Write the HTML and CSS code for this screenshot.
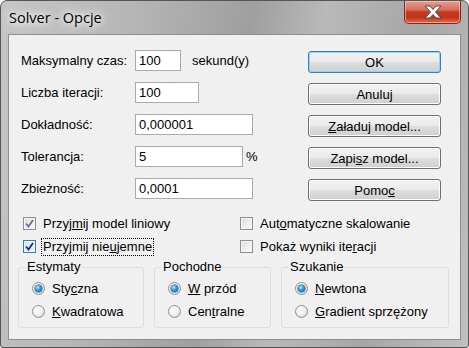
FILE: index.html
```html
<!DOCTYPE html>
<html lang="pl">
<head>
  <meta charset="UTF-8">
  <title>Solver - Opcje</title>
  <link rel="stylesheet" href="styles.css">
</head>
<body>
  <div class="window">
    <div class="titlebar">
      <span class="title">Solver - Opcje</span>
      <span class="close">
        <svg width="18" height="14" viewBox="0 0 18 14">
          <polygon points="1,1 6,1 9,4.5 12,1 17,1 11.5,7 17,13 12,13 9,9.5 6,13 1,13 6.5,7" fill="#fff" stroke="#4a4a4a" stroke-width="1" stroke-linejoin="round"/>
        </svg>
      </span>
    </div>

    <div class="client">
      <div class="top">
        <div class="fields">
          <div class="row">
            <label>Maksymalny czas:</label>
            <input class="tb w46" type="text" value="100">
            <span class="unit">sekund(y)</span>
          </div>
          <div class="row">
            <label>Liczba iteracji:</label>
            <input class="tb w64" type="text" value="100">
          </div>
          <div class="row">
            <label>Dokładność:</label>
            <input class="tb w118" type="text" value="0,000001">
          </div>
          <div class="row">
            <label>Tolerancja:</label>
            <input class="tb w108" type="text" value="5">
            <span class="pct">%</span>
          </div>
          <div class="row">
            <label>Zbieżność:</label>
            <input class="tb w118" type="text" value="0,0001">
          </div>
        </div>

        <div class="buttons">
          <button class="btn default">OK</button>
          <button class="btn">Anuluj</button>
          <button class="btn"><u>Z</u>aładuj model...</button>
          <button class="btn">Zapi<u>s</u>z model...</button>
          <button class="btn">Pomo<u>c</u></button>
        </div>
      </div>

      <div class="checks">
        <div class="opt">
          <span class="cb on"><svg width="9" height="9" viewBox="0 0 9 9"><path d="M1 4.5 L3.5 7.5 L8 1" fill="none" stroke="#5d72a8" stroke-width="1.8"/></svg></span>
          <span class="lbl">Przyj<u>m</u>ij model liniowy</span>
        </div>
        <div class="opt">
          <span class="cb"></span>
          <span class="lbl">Aut<u>o</u>matyczne skalowanie</span>
        </div>
        <div class="opt">
          <span class="cb on hot"><svg width="9" height="9" viewBox="0 0 9 9"><path d="M1 4.5 L3.5 7.5 L8 1" fill="none" stroke="#1c2f78" stroke-width="1.8"/></svg></span>
          <span class="lbl focus">Przyjmij nie<u>u</u>jemne</span>
        </div>
        <div class="opt">
          <span class="cb"></span>
          <span class="lbl">Pokaż wyniki ite<u>r</u>acji</span>
        </div>
      </div>

      <div class="groups">
        <fieldset class="grp g-est">
          <legend>Estymaty</legend>
          <div class="radios">
            <div class="opt"><span class="rb on"></span><span class="lbl">Sty<u>c</u>zna</span></div>
            <div class="opt"><span class="rb"></span><span class="lbl"><u>K</u>wadratowa</span></div>
          </div>
        </fieldset>
        <fieldset class="grp g-poch">
          <legend>Pochodne</legend>
          <div class="radios">
            <div class="opt"><span class="rb on"></span><span class="lbl"><u>W</u> przód</span></div>
            <div class="opt"><span class="rb"></span><span class="lbl">Cen<u>t</u>ralne</span></div>
          </div>
        </fieldset>
        <fieldset class="grp g-szuk">
          <legend>Szukanie</legend>
          <div class="radios">
            <div class="opt"><span class="rb on"></span><span class="lbl"><u>N</u>ewtona</span></div>
            <div class="opt"><span class="rb"></span><span class="lbl"><u>G</u>radient sprzężony</span></div>
          </div>
        </fieldset>
      </div>
    </div>
  </div>
</body>
</html>
```

FILE: styles.css
```css
body {
  margin: 0;
  background: #fff;
  font-family: "Liberation Sans", Arial, sans-serif;
  font-size: 13px;
  color: #000;
}

/* ramka okna */
.window {
  box-sizing: border-box;
  width: 469px;
  height: 348px;
  border: 1px solid #555;
  border-radius: 7px 7px 3px 3px;
  background: linear-gradient(100deg, #c6c6c6 0%, #b6b6b6 25%, #9f9f9f 48%, #b9b9b9 62%, #a6a6a6 80%, #c0c0c0 100%);
  display: flex;
  flex-direction: column;
}

.titlebar {
  height: 33px;
  display: flex;
  justify-content: space-between;
  align-items: flex-start;
}

.title {
  margin: 7px 0 0 8px;
  font-family: "Open Sans", "Noto Sans", sans-serif;
  font-size: 14.5px;
  line-height: 20px;
  color: #000;
  text-shadow: 0 0 6px #fff, 0 0 10px #fff, 0 0 16px rgba(255, 255, 255, 0.9);
}

.close {
  width: 57px;
  height: 23px;
  margin-right: 7px;
  box-sizing: border-box;
  border: 1px solid #7a2a1e;
  border-top: none;
  border-radius: 0 0 5px 5px;
  background: linear-gradient(#e6a093 0%, #d76d58 40%, #c8381f 50%, #c3341c 75%, #dd6d52 100%);
  box-shadow: inset 0 0 0 1px rgba(255, 220, 210, 0.5);
  display: flex;
  align-items: center;
  justify-content: center;
}

/* obszar klienta */
.client {
  flex: 1;
  margin: 0 7px 7px;
  background: #f0f0f0;
  border: 1px solid #8e8e8e;
}

.top {
  display: flex;
}

.fields {
  flex: 1;
  padding: 15px 0 0 12px;
  display: flex;
  flex-direction: column;
  gap: 11px;
}

.row {
  height: 21px;
  display: flex;
  align-items: center;
}

.row label {
  width: 114px;
}

.tb {
  box-sizing: border-box;
  height: 21px;
  margin: 0;
  padding: 0 3px;
  border: 1px solid #a5acb5;
  background: #fff;
  font: inherit;
  color: #000;
}

.w46 { width: 46px; }
.w64 { width: 64px; }
.w108 { width: 108px; }
.w118 { width: 118px; }

.unit {
  margin-left: 11px;
}

.pct {
  margin-left: 3px;
}

.buttons {
  width: 133px;
  margin: 16px 19px 0 0;
  display: flex;
  flex-direction: column;
  gap: 10px;
}

.btn {
  height: 22px;
  margin: 0;
  padding: 0;
  border: 1px solid #707070;
  border-radius: 3px;
  background: linear-gradient(#f2f2f2 0%, #ebebeb 48%, #dddddd 52%, #cfcfcf 100%);
  box-shadow: inset 0 0 0 1px #fcfcfc;
  font: inherit;
  color: #000;
}

.btn.default {
  border-color: #3c7fb1;
  box-shadow: inset 0 0 0 1px #8fd4f2;
}

/* pola wyboru */
.checks {
  margin-top: 14px;
  padding-left: 14px;
  display: grid;
  grid-template-columns: 217px 1fr;
  row-gap: 6px;
}

.opt {
  height: 17px;
  display: flex;
  align-items: center;
}

.cb {
  box-sizing: border-box;
  width: 13px;
  height: 13px;
  flex: none;
  border: 1px solid #8e8f8f;
  background: linear-gradient(135deg, #dcdcdc, #fbfbfb);
  box-shadow: inset 0 0 0 1px #f4f4f4;
  display: flex;
  align-items: center;
  justify-content: center;
}

.cb.hot {
  border-color: #3c7fb1;
  background: linear-gradient(135deg, #c7e7f8, #eaf6fd);
}

.lbl {
  margin-left: 6px;
  padding: 0 1px;
  line-height: 16px;
}

.lbl.focus {
  outline: 1px dotted #000;
  outline-offset: 0;
}

/* grupy */
.groups {
  margin: 4px 11px 0 9px;
  display: flex;
  gap: 10px;
}

.grp {
  margin: 0;
  padding: 0 0 7px 6px;
  border: 1px solid #d5dfe5;
  border-radius: 3px;
}

.grp legend {
  padding: 0 2px;
  line-height: 16px;
}

.g-est { width: 126px; box-sizing: border-box; }
.g-poch { width: 117px; box-sizing: border-box; }
.g-szuk { flex: 1; }

.radios {
  margin: 5px 0 0 7px;
  display: flex;
  flex-direction: column;
  gap: 6px;
}

.radios .lbl {
  margin-left: 6px;
}

.rb {
  box-sizing: border-box;
  width: 13px;
  height: 13px;
  flex: none;
  border-radius: 50%;
  border: 1px solid #8e8f8f;
  background: radial-gradient(circle at 40% 35%, #ffffff 0%, #f0f0f0 45%, #cfcfcf 100%);
  display: flex;
  align-items: center;
  justify-content: center;
}

.rb.on::after {
  content: "";
  width: 7px;
  height: 7px;
  border-radius: 50%;
  background: radial-gradient(circle at 40% 35%, #b8ecff 0%, #31a1de 40%, #0b4f8c 100%);
  box-shadow: 0 0 0 0.5px #10386a;
}
```
